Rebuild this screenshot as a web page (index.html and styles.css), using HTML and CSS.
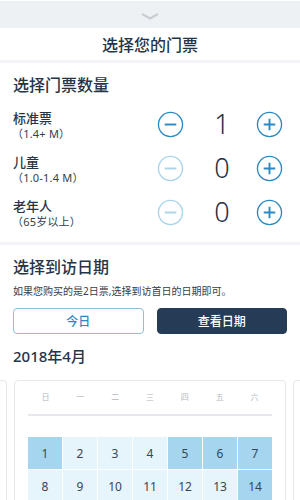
FILE: index.html
```html
<!DOCTYPE html>
<html lang="zh">
<head>
<meta charset="utf-8">
<link rel="stylesheet" href="styles.css">
</head>
<body>
<div class="pull">
  <svg class="chev" width="18" height="8" viewBox="0 0 18 8"><path d="M2 1.5 L9 5.5 L16 1.5" fill="none" stroke="#c9ced4" stroke-width="2.4" stroke-linecap="round" stroke-linejoin="round"/></svg>
</div>
<div class="header">选择您的门票</div>
<div class="sep"></div>
<section class="qty">
  <h2 class="h">选择门票数量</h2>
  <div class="row">
    <div class="lab"><div class="name">标准票</div><div class="sub">（1.4+ M）</div></div>
    <div class="ctrl">
      <span class="btn"><svg viewBox="0 0 28 28"><circle cx="14" cy="14" r="12.5"/><path d="M8 14h12"/></svg></span>
      <span class="num">1</span>
      <span class="btn"><svg viewBox="0 0 28 28"><circle cx="14" cy="14" r="12.5"/><path d="M8 14h12M14 8v12"/></svg></span>
    </div>
  </div>
  <div class="row">
    <div class="lab"><div class="name">儿童</div><div class="sub">（1.0-1.4 M）</div></div>
    <div class="ctrl">
      <span class="btn off"><svg viewBox="0 0 28 28"><circle cx="14" cy="14" r="12.5"/><path d="M8 14h12"/></svg></span>
      <span class="num">0</span>
      <span class="btn"><svg viewBox="0 0 28 28"><circle cx="14" cy="14" r="12.5"/><path d="M8 14h12M14 8v12"/></svg></span>
    </div>
  </div>
  <div class="row">
    <div class="lab"><div class="name">老年人</div><div class="sub">（65岁以上）</div></div>
    <div class="ctrl">
      <span class="btn off"><svg viewBox="0 0 28 28"><circle cx="14" cy="14" r="12.5"/><path d="M8 14h12"/></svg></span>
      <span class="num">0</span>
      <span class="btn"><svg viewBox="0 0 28 28"><circle cx="14" cy="14" r="12.5"/><path d="M8 14h12M14 8v12"/></svg></span>
    </div>
  </div>
</section>
<div class="sep"></div>
<section class="date">
  <h2 class="h">选择到访日期</h2>
  <p class="note">如果您购买的是2日票,选择到访首日的日期即可。</p>
  <div class="btns">
    <button class="b today">今日</button>
    <button class="b view">查看日期</button>
  </div>
  <h3 class="month">2018年4月</h3>
</section>
<div class="carousel">
  <div class="card"></div>
  <div class="card main">
    <div class="wk"><span>日</span><span>一</span><span>二</span><span>三</span><span>四</span><span>五</span><span>六</span></div>
    <div class="line"></div>
    <div class="grid">
      <span class="d hi">1</span><span class="d">2</span><span class="d">3</span><span class="d">4</span><span class="d hi">5</span><span class="d hi">6</span><span class="d hi">7</span>
      <span class="d">8</span><span class="d">9</span><span class="d">10</span><span class="d">11</span><span class="d">12</span><span class="d">13</span><span class="d hi">14</span>
    </div>
  </div>
  <div class="card"></div>
</div>
</body>
</html>
```
FILE: styles.css
```css
* { box-sizing: border-box; }
html, body { margin: 0; padding: 0; }
body {
  width: 300px;
  height: 500px;
  overflow: hidden;
  background: #fff;
  font-family: "Noto Sans", "Noto Sans CJK SC", sans-serif;
  color: #253b56;
}
.pull {
  height: 28px;
  background: #eef1f4;
  border-top: 1px solid #fff;
  display: flex;
  justify-content: center;
  align-items: center;
}
.chev { display: block; margin-top: 4px; }
.header {
  height: 32px;
  display: flex;
  align-items: center;
  justify-content: center;
  font-size: 16px;
  font-weight: 500;
  color: #253447;
}
.sep { height: 3px; background: #f1f3f6; }
.qty { padding: 10px 13px 8px 13px; }
.h {
  margin: 0;
  font-size: 16px;
  font-weight: 500;
  line-height: 24px;
  color: #253447;
}
.qty .h { margin-bottom: 5px; }
.row {
  height: 44px;
  display: flex;
  align-items: center;
  justify-content: space-between;
}
.lab { line-height: 15px; margin-top: 3px; }
.name { font-size: 13px; font-weight: 500; color: #253447; }
.sub { font-size: 11px; color: #33404d; line-height: 15px; margin-left: -1px; letter-spacing: 0.2px; }
.ctrl { display: flex; align-items: center; margin-right: 4px; }
.btn { width: 27px; height: 27px; display: block; }
.btn svg { width: 27px; height: 27px; display: block; fill: none; stroke: #2d8ac0; stroke-width: 1.4; }
.btn svg path { stroke-width: 2; }
.btn.off svg { stroke: #a9d4ea; }
.num {
  width: 72px;
  text-align: center;
  font-size: 27px;
  font-weight: 300;
  color: #1f2f45;
  line-height: 28px;
  padding-left: 4px;
}
.date { padding: 10px 13px 0 13px; }
.note {
  margin: 5px 0 0 0;
  font-size: 10px;
  line-height: 14px;
  color: #33404d;
}
.btns { display: flex; gap: 13px; margin-top: 10px; }
.b {
  flex: 1;
  height: 26px;
  border-radius: 4px;
  font-family: inherit;
  font-size: 12px;
  font-weight: 500;
  padding: 0;
}
.today { background: #fff; border: 1.5px solid #8ebfd6; color: #2d86bd; }
.view { background: #253b56; border: 1px solid #253b56; color: #fff; }
.month {
  margin: 11px 0 0 0;
  font-size: 15px;
  font-weight: 500;
  line-height: 22px;
  color: #253447;
}
.carousel {
  display: flex;
  justify-content: center;
  gap: 7px;
  margin-top: 13px;
  overflow: hidden;
}
.card {
  flex: 0 0 272px;
  height: 140px;
  border: 1px solid #e4e8ed;
  border-radius: 4px;
}
.main { padding: 0 13px; }
.wk {
  display: grid;
  grid-template-columns: repeat(7, 1fr);
  height: 30px;
  align-items: center;
  text-align: center;
  font-size: 8px;
  color: #b3b9c0;
}
.line { height: 2px; background: #e6e8eb; margin-top: 3px; }
.grid {
  margin-top: 21px;
  display: grid;
  grid-template-columns: repeat(7, 1fr);
  gap: 1px;
}
.d {
  height: 32px;
  display: flex;
  align-items: center;
  justify-content: center;
  background: #e6f4fc;
  font-size: 12px;
  color: #3a4552;
}
.d.hi { background: #a5d5ef; }
```
